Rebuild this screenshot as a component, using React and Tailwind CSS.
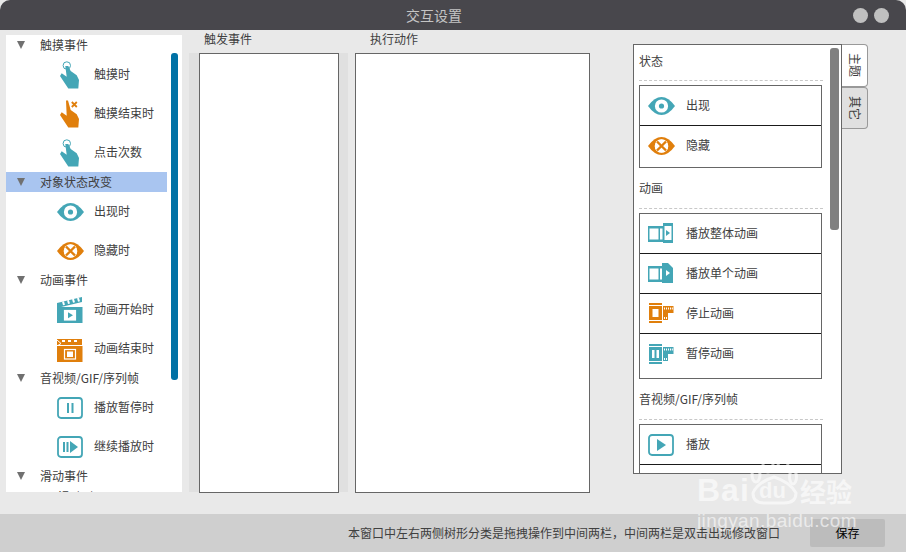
const TEAL = "#44a6b6";
const ORANGE = "#e07f0c";

function Hand({ color, ring, cross }) {
  return (
    <svg width="20" height="28" viewBox="0 0 20 28">
      {ring && <circle cx="6.8" cy="4.5" r="3.7" fill="none" stroke={color} strokeWidth="1" />}
      <path
        d={`M${cross ? "6 0.5 L8 0.5" : "5.3 5 L8.3 5"} L10.7 10 L16.7 14.3 L19 19 L18.3 27.5 L8.3 27.5 L0 15 L1.7 12.3 L6.7 15.7 Z`}
        fill={color}
      />
      {cross && <path d="M11.8 2 L16.8 7 M16.8 2 L11.8 7" stroke={color} strokeWidth="1.8" />}
    </svg>
  );
}

function Eye({ color, cross }) {
  return (
    <svg width="27" height="18" viewBox="0 0 27 18">
      <path d="M0 9 Q6.5 0 13.5 0 Q20.5 0 27 9 Q20.5 18 13.5 18 Q6.5 18 0 9 Z" fill={color} />
      <circle cx="13.5" cy="9" r="6.6" fill="#fff" />
      {cross ? (
        <>
          <circle cx="13.5" cy="9" r="6.8" fill="#fff" />
          <path d="M9 4.5 L18 13.5 M18 4.5 L9 13.5" stroke={color} strokeWidth="2.4" />
        </>
      ) : (
        <circle cx="13.5" cy="9" r="2.6" fill={color} />
      )}
    </svg>
  );
}

function Clapper({ color, stop }) {
  return (
    <svg width="26" height="26" viewBox="0 0 26 26">
      {stop ? (
        <>
          <path d="M0 3 H25 V9 H0 Z" fill={color} />
          <path d="M5 4 H8 V6 H5 Z M11 4 H14 V6 H11 Z M17 4 H20 V6 H17 Z" fill="#fff" />
          <path d="M0 4 L4 7.5 L0 10" fill="none" stroke="#fff" strokeWidth="1" />
        </>
      ) : (
        <>
          <path d="M0 6 L25 0 L25 5 L0 11 Z" fill={color} />
          <path d="M6 4.5 L7 8 M11 3.3 L12 6.8 M16 2.1 L17 5.6 M21 1 L22 4.5" stroke="#fff" strokeWidth="2" />
        </>
      )}
      <rect x="0" y="10" width="25.5" height="16" fill={color} />
      <rect x="7.5" y="13.5" width="11" height="9.5" fill={stop ? "none" : "#fff"} stroke="#fff" strokeWidth="1.2" />
      {stop ? <rect x="10" y="15.5" width="6" height="5.5" fill="#fff" /> : <path d="M11 15.3 L16 18.2 L11 21.2 Z" fill={color} />}
    </svg>
  );
}

function BoxIcon({ kind }) {
  return (
    <svg width="26" height="22" viewBox="0 0 26 22">
      <rect x="1" y="1" width="24" height="20" rx="3" fill="none" stroke={TEAL} strokeWidth="1.8" />
      {kind === "pause" && <path d="M10 6 H12 V16 H10 Z M14.5 6 H16.5 V16 H14.5 Z" fill={TEAL} />}
      {kind === "resume" && <path d="M6 6 H8 V16 H6 Z M9.5 6 H11.5 V16 H9.5 Z M13 5 L21 11 L13 17 Z" fill={TEAL} />}
      {kind === "play" && <path d="M9 5 L18 11 L9 17 Z" fill={TEAL} />}
    </svg>
  );
}

function FilmPlay({ single }) {
  return (
    <svg width="26" height="21" viewBox="0 0 26 21">
      <path d="M0 3 H16 V19 H0 Z" fill={TEAL} />
      <rect x="1.5" y="5.5" width="9" height="11" fill="#fff" />
      <rect x="12" y="5.5" width="2.5" height="11" fill="#fff" />
      {single ? (
        <path d="M14 0 H20 L25 5 V20 H14 Z" fill={TEAL} />
      ) : (
        <>
          <rect x="15" y="0" width="10" height="20" fill={TEAL} />
          <rect x="16.5" y="3" width="7" height="14" fill="#fff" />
        </>
      )}
      <path d="M18 7 L22 10 L18 13 Z" fill={single ? "#fff" : TEAL} />
    </svg>
  );
}

function FilmStop({ color, pause }) {
  return (
    <svg width="25" height="21" viewBox="0 0 25 21">
      <rect x="0" y="0" width="13" height="2" fill={color} />
      <rect x="0" y="18" width="13" height="2" fill={color} />
      <rect x="0" y="3" width="13" height="14" fill={color} />
      {pause ? (
        <path d="M3 6 H5.5 V14 H3 Z M7.5 6 H10 V14 H7.5 Z" fill="#fff" />
      ) : (
        <rect x="3.5" y="6" width="6" height="8" fill="#fff" />
      )}
      <path d="M14 3 H24.5 V10 H19 V17 H14 Z" fill={color} />
      <path d="M15.5 4.5 V6.5 M17.5 4.5 V6.5 M19.5 4.5 V6.5 M21.5 4.5 V6.5 M23.3 4.5 V6.5 M15.5 14 V16 M17.5 14 V16" stroke="#fff" strokeWidth="1" />
    </svg>
  );
}

function TreeHeader({ label, selected }) {
  return (
    <div className={`flex h-[20px] items-center ${selected ? "w-[161px] bg-[#a9c5f0]" : ""}`}>
      <svg width="8" height="8" viewBox="0 0 8 8" className="ml-[11px]">
        <path d="M0 0 H8 L4 8 Z" fill="#707070" />
      </svg>
      <span className="ml-[15px]">{label}</span>
    </div>
  );
}

function TreeItem({ icon, label }) {
  return (
    <div className="flex h-[39px] items-center">
      <div className="ml-[49px] flex w-[30px] justify-center">{icon}</div>
      <span className="mb-[2px] ml-[9px]">{label}</span>
    </div>
  );
}

function ActionBox({ items, extra }) {
  return (
    <div className={`w-[183px] border border-[#666] ${extra}`}>
      {items.map(([icon, label], i) => (
        <div key={label} className={`flex h-[40px] items-center ${i < items.length - 1 ? "border-b border-[#1a1a1a]" : ""}`}>
          <div className="ml-[6px] flex w-[30px] justify-center">{icon}</div>
          <span className="mb-[2px] ml-[10px]">{label}</span>
        </div>
      ))}
    </div>
  );
}

function SectionTitle({ label, className }) {
  return (
    <div className={`mb-[4px] flex w-[184px] items-center border-b border-dashed border-[#c8c8c8] ${className}`}>
      {label}
    </div>
  );
}

export default function App() {
  return (
    <div
      className="relative flex h-[552px] w-[906px] flex-col overflow-hidden bg-[#e9e9e9] text-[12px] text-[#404040]"
      style={{ fontFamily: '"Noto Sans CJK SC", "Liberation Sans", sans-serif' }}
    >
      <header className="flex h-[30px] items-center rounded-t-[10px] bg-[#48474c]">
        <div className="w-[853px] pl-[15px] text-center text-[14px] text-[#c4c4c4]">交互设置</div>
        <div className="flex gap-[6px]">
          <span className="h-[15px] w-[15px] rounded-full bg-[#c0c0c0]" />
          <span className="h-[15px] w-[15px] rounded-full bg-[#c0c0c0]" />
        </div>
      </header>

      <main className="flex h-[484px]">
        <aside className="relative ml-[6px] mt-[5px] h-[457px] w-[176px] overflow-hidden bg-white">
          <TreeHeader label="触摸事件" />
          <TreeItem icon={<Hand color={TEAL} ring />} label="触摸时" />
          <TreeItem icon={<Hand color={ORANGE} cross />} label="触摸结束时" />
          <TreeItem icon={<Hand color={TEAL} ring />} label="点击次数" />
          <TreeHeader label="对象状态改变" selected />
          <TreeItem icon={<Eye color={TEAL} />} label="出现时" />
          <TreeItem icon={<Eye color={ORANGE} cross />} label="隐藏时" />
          <TreeHeader label="动画事件" />
          <TreeItem icon={<Clapper color={TEAL} />} label="动画开始时" />
          <TreeItem icon={<Clapper color={ORANGE} stop />} label="动画结束时" />
          <TreeHeader label="音视频/GIF/序列帧" />
          <TreeItem icon={<BoxIcon kind="pause" />} label="播放暂停时" />
          <TreeItem icon={<BoxIcon kind="resume" />} label="继续播放时" />
          <TreeHeader label="滑动事件" />
          <div className="flex h-[22px] items-center pl-[52px]">滑动时</div>
          <div className="absolute left-[165px] top-[18px] h-[327px] w-[7px] rounded-[3px] bg-[#0071a5]" />
        </aside>

        <section className="ml-[7px] w-[150px]">
          <div className="flex h-[18px] items-center pl-[15px]">触发事件</div>
          <div className="mt-[5px] flex h-[440px]">
            <div className="h-[439px] w-[10px] bg-[#e0e0e0]" />
            <div className="w-[140px] border border-[#666] bg-white" />
          </div>
        </section>

        <section className="w-[251px]">
          <div className="flex h-[18px] items-center pl-[31px]">执行动作</div>
          <div className="mt-[5px] flex h-[440px]">
            <div className="h-[439px] w-[9px] bg-[#e0e0e0]" />
            <div className="ml-[7px] w-[235px] border border-[#666] bg-white" />
          </div>
        </section>

        <section className="ml-[43px] mt-[14px] flex h-[430px]">
          <div className="relative h-[430px] w-[209px] overflow-hidden border border-[#666] bg-white pl-[5px]">
            <SectionTitle label="状态" className="h-[36px] pb-[3px]" />
            <ActionBox
              extra="pb-[1px]"
              items={[
                [<Eye color={TEAL} />, "出现"],
                [<Eye color={ORANGE} cross />, "隐藏"],
              ]}
            />
            <SectionTitle label="动画" className="h-[41px]" />
            <ActionBox
              extra="pb-[4px]"
              items={[
                [<FilmPlay />, "播放整体动画"],
                [<FilmPlay single />, "播放单个动画"],
                [<FilmStop color={ORANGE} />, "停止动画"],
                [<FilmStop color={TEAL} pause />, "暂停动画"],
              ]}
            />
            <SectionTitle label="音视频/GIF/序列帧" className="h-[41px]" />
            <ActionBox
              items={[
                [<BoxIcon kind="play" />, "播放"],
                [<BoxIcon kind="pause" />, "暂停"],
              ]}
            />
            <div className="absolute left-[196px] top-[3px] h-[182px] w-[9px] rounded-[3px] bg-[#808080]" />
          </div>
          <div className="flex flex-col">
            <div className="flex h-[43px] w-[26px] items-center justify-center rounded-r-[4px] border border-l-0 border-[#999] bg-white [text-orientation:sideways] [writing-mode:vertical-rl]">
              主题
            </div>
            <div className="flex h-[42px] w-[26px] items-center justify-center rounded-r-[4px] border border-l-0 border-[#999] bg-[#e0e0e0] [text-orientation:sideways] [writing-mode:vertical-rl]">
              其它
            </div>
          </div>
        </section>
      </main>

      <footer className="flex h-[38px] items-center justify-end bg-[#cfcfcf] pr-[21px]">
        <span className="mr-[30px]">本窗口中左右两侧树形分类是拖拽操作到中间两栏，中间两栏是双击出现修改窗口</span>
        <button className="h-[28px] w-[75px] rounded-[2px] bg-[#bcbcbc] text-[12px] text-black">保存</button>
      </footer>

      <div className="pointer-events-none absolute left-[697px] top-[455px] h-[80px] w-[165px] text-white opacity-60">
        <svg width="48" height="50" viewBox="0 0 48 50" className="absolute left-[53px] top-0">
          <g fill="none" stroke="#fff" strokeWidth="3">
            <ellipse cx="6" cy="20" rx="4" ry="7" />
            <ellipse cx="18" cy="9" rx="5" ry="8" />
            <ellipse cx="33" cy="8" rx="5" ry="7" />
            <ellipse cx="43" cy="22" rx="3.5" ry="7" />
            <path d="M3 38 Q8 27 24 22 Q40 27 46 38 Q46 48 34 48 L14 48 Q3 48 3 38 Z" />
          </g>
        </svg>
        <span className="absolute left-0 top-[19px] text-[32px] font-bold leading-[32px] tracking-[1px]" style={{ fontFamily: '"Liberation Sans", sans-serif' }}>Bai</span>
        <span className="absolute left-[62px] top-[24px] text-[22px] font-bold leading-[24px]" style={{ fontFamily: '"Liberation Sans", sans-serif' }}>du</span>
        <span className="absolute left-[103px] top-[21px] text-[26px] font-bold leading-[30px]">经验</span>
        <span className="absolute left-0 top-[55px] text-[19px] leading-[22px] tracking-[0.4px]" style={{ fontFamily: '"Liberation Sans", sans-serif' }}>jingyan.baidu.com</span>
      </div>
    </div>
  );
}
